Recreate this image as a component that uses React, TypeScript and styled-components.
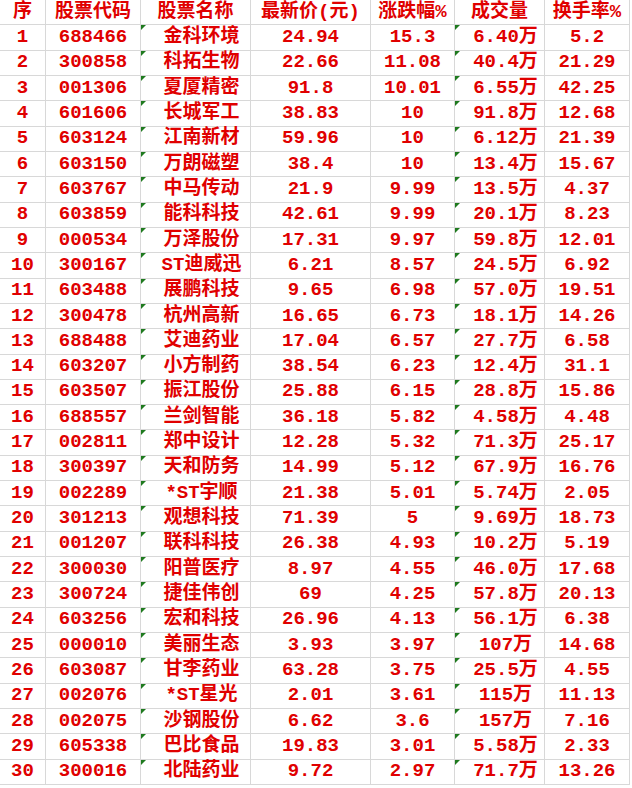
import React from 'react'
import styled, { createGlobalStyle } from 'styled-components'

const GlobalStyle = createGlobalStyle`
  html, body {
    margin: 0;
    padding: 0;
    background: #ffffff;
  }
`

const Sheet = styled.div`
  display: grid;
  grid-template-columns: 46px 95px 110px 120px 84px 90px 85px;
  grid-template-rows: repeat(31, 1fr);
  width: 630px;
  height: 785px;
  font-family: 'Liberation Mono', 'Noto Sans CJK SC', monospace;
  font-size: 19px;
  font-weight: 700;
  color: #e00000;
`

const Cell = styled.div<{ $shift?: boolean; $flag?: boolean }>`
  position: relative;
  display: flex;
  align-items: center;
  justify-content: center;
  box-sizing: border-box;
  border-right: 1px solid #d8d8d8;
  border-bottom: 1px solid #d8d8d8;
  padding-left: ${p => (p.$shift ? '12px' : '0')};
  white-space: nowrap;
  line-height: 1;

  &::before {
    content: '';
    display: ${p => (p.$flag ? 'block' : 'none')};
    position: absolute;
    top: 0;
    left: 0;
    width: 0;
    height: 0;
    border-top: 5px solid #1f7a1f;
    border-right: 5px solid transparent;
  }
`

const headers = ['序', '股票代码', '股票名称', '最新价(元)', '涨跌幅%', '成交量', '换手率%']

const rows: string[][] = [
  ['688466', '金科环境', '24.94', '15.3', '6.40万', '5.2'],
  ['300858', '科拓生物', '22.66', '11.08', '40.4万', '21.29'],
  ['001306', '夏厦精密', '91.8', '10.01', '6.55万', '42.25'],
  ['601606', '长城军工', '38.83', '10', '91.8万', '12.68'],
  ['603124', '江南新材', '59.96', '10', '6.12万', '21.39'],
  ['603150', '万朗磁塑', '38.4', '10', '13.4万', '15.67'],
  ['603767', '中马传动', '21.9', '9.99', '13.5万', '4.37'],
  ['603859', '能科科技', '42.61', '9.99', '20.1万', '8.23'],
  ['000534', '万泽股份', '17.31', '9.97', '59.8万', '12.01'],
  ['300167', 'ST迪威迅', '6.21', '8.57', '24.5万', '6.92'],
  ['603488', '展鹏科技', '9.65', '6.98', '57.0万', '19.51'],
  ['300478', '杭州高新', '16.65', '6.73', '18.1万', '14.26'],
  ['688488', '艾迪药业', '17.04', '6.57', '27.7万', '6.58'],
  ['603207', '小方制药', '38.54', '6.23', '12.4万', '31.1'],
  ['603507', '振江股份', '25.88', '6.15', '28.8万', '15.86'],
  ['688557', '兰剑智能', '36.18', '5.82', '4.58万', '4.48'],
  ['002811', '郑中设计', '12.28', '5.32', '71.3万', '25.17'],
  ['300397', '天和防务', '14.99', '5.12', '67.9万', '16.76'],
  ['002289', '*ST宇顺', '21.38', '5.01', '5.74万', '2.05'],
  ['301213', '观想科技', '71.39', '5', '9.69万', '18.73'],
  ['001207', '联科科技', '26.38', '4.93', '10.2万', '5.19'],
  ['300030', '阳普医疗', '8.97', '4.55', '46.0万', '17.68'],
  ['300724', '捷佳伟创', '69', '4.25', '57.8万', '20.13'],
  ['603256', '宏和科技', '26.96', '4.13', '56.1万', '6.38'],
  ['000010', '美丽生态', '3.93', '3.97', '107万', '14.68'],
  ['603087', '甘李药业', '63.28', '3.75', '25.5万', '4.55'],
  ['002076', '*ST星光', '2.01', '3.61', '115万', '11.13'],
  ['002075', '沙钢股份', '6.62', '3.6', '157万', '7.16'],
  ['605338', '巴比食品', '19.83', '3.01', '5.58万', '2.33'],
  ['300016', '北陆药业', '9.72', '2.97', '71.7万', '13.26'],
]

// name and volume columns are stored as text in the sheet
const textCols = [1, 4]

export default function App() {
  return (
    <>
      <GlobalStyle />
      <Sheet>
        {headers.map(h => (
          <Cell key={h}>{h}</Cell>
        ))}
        {rows.map((row, i) => (
          <React.Fragment key={row[0]}>
            <Cell>{i + 1}</Cell>
            {row.map((v, j) => (
              <Cell key={j} $shift={textCols.includes(j)} $flag={textCols.includes(j)}>
                {v}
              </Cell>
            ))}
          </React.Fragment>
        ))}
      </Sheet>
    </>
  )
}
